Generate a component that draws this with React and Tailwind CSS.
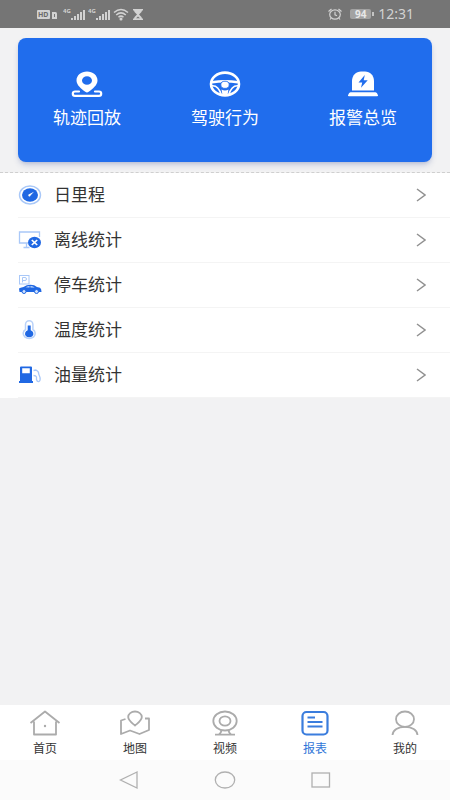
import React, { useState } from "react";

const FONT = "font-['Noto_Sans','Noto_Sans_CJK_SC',sans-serif]";

function SignalIcon() {
  return (
    <svg className="h-4 w-6" viewBox="0 0 24 16" fill="#d2d2d2" aria-hidden="true">
      <text x="0" y="7" fontSize="6" fontWeight="700">4G</text>
      <rect x="8" y="12" width="2" height="2" />
      <rect x="11" y="10" width="2" height="4" />
      <rect x="14" y="8" width="2" height="6" />
      <rect x="17" y="6" width="2" height="8" />
      <rect x="20" y="4" width="2" height="10" />
    </svg>
  );
}

function StatusBar() {
  return (
    <header className="flex h-7 items-center justify-between bg-[#757575] pr-9 pl-9 text-[#d2d2d2]">
      <div className="flex items-center gap-px">
        <svg className="mr-1 h-4 w-[22px]" viewBox="0 0 22 16" aria-hidden="true">
          <rect x="1" y="4" width="13" height="9" rx="1" fill="#d2d2d2" />
          <text x="2" y="11" fontSize="7" fontWeight="700" fill="#6b6b6b">HD</text>
          <path d="M16 6h3.500q1.500 0 1.500 1.500V13h-5z" fill="#d2d2d2" />
          <path d="M18.500 8v3" stroke="#757575" />
        </svg>
        <SignalIcon />
        <SignalIcon />
        <svg className="h-4 w-4" viewBox="0 0 16 16" fill="none" stroke="#d2d2d2" strokeWidth="1.500" aria-hidden="true">
          <path d="M1 6.500Q8 0.500 15 6.500M3.200 9Q8 4.800 12.800 9M5.500 11.300Q8 9 10.500 11.300" />
          <circle cx="8" cy="13" r="0.800" fill="#d2d2d2" />
        </svg>
        <svg className="ml-0.5 h-4 w-3" viewBox="0 0 12 16" fill="#d2d2d2" aria-hidden="true">
          <path d="M1 3h10v1.500h-1L9.500 6 7 8.500 9.500 11l.5 1.500h1V14H1v-1.500h1l.5-1.500L5 8.500 2.500 6 2 4.500H1z" />
          <path d="M4 12.300L6 10.500L8 12.300z" fill="#757575" />
        </svg>
      </div>
      <div className="flex items-center gap-1">
        <svg className="mr-1 h-4 w-3.5" viewBox="0 0 14 16" fill="none" stroke="#d2d2d2" strokeWidth="1.200" aria-hidden="true">
          <ellipse cx="7" cy="8.500" rx="5.300" ry="4.700" />
          <path d="M7 5.800v3l2 1M0.500 5.500L3.500 3M13.500 5.500L10.500 3M3.200 12l-1.200 1.500M10.800 12l1.200 1.500" />
        </svg>
        <span className="flex items-center">
          <span className="h-[10px] w-[21px] rounded-xs bg-[#a2a2a2] text-center text-[10px] leading-[10px] font-bold text-[#e8e8e8]">94</span>
          <span className="ml-px h-1 w-0.5 bg-[#c4c4c4]" />
        </span>
        <span className="text-sm leading-5">12:31</span>
      </div>
    </header>
  );
}

const shortcuts = [
  {
    label: "轨迹回放",
    icon: (
      <svg className="h-7 w-8" viewBox="0 0 32 28" fill="none" aria-hidden="true">
        <path
          fill="#fff"
          fillRule="evenodd"
          d="M16 1.500c5.800 0 10.500 3.800 10.500 9 0 4.800-5 8.300-8.800 11.300q-1.700 1.300-3.400 0C10.500 18.800 5.500 15.300 5.500 10.500c0-5.200 4.700-9 10.500-9zm0 4.700a5 4.300 0 1 0 0 8.600 5 4.300 0 1 0 0-8.600z"
        />
        <path d="M8 21.500H4a2.200 2.200 0 0 0 0 4.400h24a2.200 2.200 0 0 0 0-4.400H24" stroke="#fff" strokeWidth="2.200" strokeLinecap="round" />
      </svg>
    ),
  },
  {
    label: "驾驶行为",
    icon: (
      <svg className="h-7 w-8" viewBox="0 0 32 28" fill="none" aria-hidden="true">
        <ellipse cx="16" cy="14" rx="14" ry="11.400" stroke="#fff" strokeWidth="2.600" />
        <path d="M3 12.300Q16 10.200 29 12.300" stroke="#fff" strokeWidth="2.600" />
        <path d="M3 15.800Q9.500 15.300 12.300 25M29 15.800Q22.500 15.300 19.700 25" stroke="#fff" strokeWidth="1.600" />
        <path d="M12.500 19.500q3.500 1.800 7 0L18.500 25h-5z" fill="#fff" />
        <ellipse cx="16" cy="14.800" rx="4.200" ry="3.600" fill="#fff" stroke="#206ded" strokeWidth="0.900" />
      </svg>
    ),
  },
  {
    label: "报警总览",
    icon: (
      <svg className="h-7 w-8" viewBox="0 0 32 28" aria-hidden="true">
        <path fill="#fff" d="M5 20.500V11C5 5.500 9 1.500 14 1.500h4c5 0 9 4 9 9.500v9.500z" />
        <path fill="#206ded" d="M17.800 5l-6.300 7.500h3.700l-1.200 5.300 6.700-7.500h-4z" />
        <path fill="#fff" d="M3.500 22.300h25q1.500 0 2.500 3 .3 1-1 1H2q-1.300 0-1-1 1-3 2.500-3z" />
      </svg>
    ),
  },
];

const reports = [
  {
    label: "日里程",
    icon: (
      <svg className="h-6 w-6" viewBox="0 0 24 24" fill="none" aria-hidden="true">
        <ellipse cx="12" cy="12" rx="10.500" ry="9" stroke="#a9c8f8" strokeWidth="1.400" />
        <ellipse cx="12" cy="12" rx="8" ry="6.800" fill="#2068e3" />
        <path d="M16 8.800L11 11.300a1.100 1.100 0 1 0 1.500 1.300z" fill="#fff" />
      </svg>
    ),
  },
  {
    label: "离线统计",
    icon: (
      <svg className="h-6 w-6" viewBox="0 0 24 24" fill="none" aria-hidden="true">
        <path d="M10 15H1.500V4h20v5M8.500 15.500v3.500M5.500 19.500h6" stroke="#a9c8f8" strokeWidth="1.300" />
        <ellipse cx="16.500" cy="14.500" rx="6.500" ry="5.800" fill="#2068e3" />
        <path d="M13.800 12l5.400 5M19.200 12l-5.400 5" stroke="#fff" strokeWidth="1.700" />
      </svg>
    ),
  },
  {
    label: "停车统计",
    icon: (
      <svg className="h-6 w-6" viewBox="0 0 24 24" fill="none" aria-hidden="true">
        <rect x="1.500" y="2.500" width="9.500" height="8.500" stroke="#a9c8f8" />
        <path d="M4.500 9.500V4.500h2.500a1.500 1.500 0 0 1 0 3H4.500" stroke="#a9c8f8" />
        <path d="M1 15.500q1-1 4.500-1.500 3-2.200 7-2.200t6.500 2.200l3 .8q1.500.7 1.500 4.200h-22z" fill="#2068e3" />
        <path d="M7.500 14.200q1.700-1.200 4-1.300v1.500zM12.500 12.900q2.500.1 4.300 1.500h-4.300z" fill="#cfe0fb" />
        <circle cx="6" cy="18.500" r="2" fill="#cfe0fb" stroke="#2068e3" />
        <circle cx="18.500" cy="18.500" r="2" fill="#cfe0fb" stroke="#2068e3" />
      </svg>
    ),
  },
  {
    label: "温度统计",
    icon: (
      <svg className="h-6 w-6" viewBox="0 0 24 24" fill="none" aria-hidden="true">
        <path d="M7.500 11.500V6.500a3.700 3.700 0 0 1 7.400 0v5a6 5 0 1 1-7.400 0z" stroke="#b9d2f9" strokeWidth="1.500" />
        <path d="M9.700 7.500h3v4.700a4.200 3.700 0 1 1-3 0z" fill="#2068e3" />
      </svg>
    ),
  },
  {
    label: "油量统计",
    icon: (
      <svg className="h-6 w-6" viewBox="0 0 24 24" fill="none" aria-hidden="true">
        <path fill="#2068e3" fillRule="evenodd" d="M2 4.500q0-1 1-1h10q1 0 1 1v13.500h1V20H1v-2h1zM4.200 5.200v5h7.600v-5z" />
        <path d="M15.500 7.500l2.500-.5q3 1.500 2.700 4 .8 2 1.300 3.500.6 3-1 4-2 .3-2.500-2V14q-.5-1.500-3-1.500" stroke="#a9c8f8" strokeWidth="1.300" />
      </svg>
    ),
  },
];

const tabs = [
  {
    label: "首页",
    icon: (
      <>
        <path d="M1.500 14L16 2.500L30.500 14M5 12.500V25.500H27V12.500" />
        <circle cx="16" cy="17" r="1.200" fill="currentColor" stroke="none" />
      </>
    ),
  },
  {
    label: "地图",
    icon: (
      <>
        <path d="M16 16.500C12.500 13.500 9.200 11.500 9.200 8a6.800 5.500 0 0 1 13.600 0C22.800 11.500 19.500 13.500 16 16.500z" />
        <path d="M6.500 10L2 11.500V25l9-3.500L20.500 25l9.500-4V9.500h-4" />
      </>
    ),
  },
  {
    label: "视频",
    icon: (
      <>
        <ellipse cx="16" cy="12" rx="11.700" ry="9.500" />
        <ellipse cx="16" cy="12" rx="5.500" ry="4.700" />
        <path d="M12.500 21.500Q12 24 10 25.500M19.500 21.500Q20 24 22 25.500M6 25.700h20" />
      </>
    ),
  },
  {
    label: "报表",
    icon: (
      <>
        <rect x="3.500" y="3" width="25" height="22.500" rx="4" strokeWidth="2.200" />
        <path d="M8.500 8.500H16M8.500 13H23.500M8.500 17.500H23.500" />
      </>
    ),
  },
  {
    label: "我的",
    icon: (
      <>
        <ellipse cx="16" cy="10.200" rx="9" ry="7.700" />
        <path d="M3.500 26C4 21 9 17.900 16 17.900S28 21 28.500 26" />
      </>
    ),
  },
];

export default function App() {
  const [active, setActive] = useState("报表");

  return (
    <div className={`flex min-h-screen flex-col bg-[#f2f2f3] text-[#333] ${FONT}`}>
      <StatusBar />

      <main className="flex-1">
        <section className="border-b border-dashed border-[#cfcfcf] px-[18px] py-[10px]">
          <div className="grid grid-cols-3 rounded-lg bg-[#206ded] py-8 shadow-md shadow-blue-900/20">
            {shortcuts.map((item) => (
              <button key={item.label} type="button" className="flex flex-col items-center gap-2 text-white">
                {item.icon}
                <span className="text-[17px] leading-6">{item.label}</span>
              </button>
            ))}
          </div>
        </section>

        <ul className="bg-white">
          {reports.map((item) => (
            <li key={item.label} className="pl-[18px]">
              <a href="#" className="flex h-[45px] items-center border-b border-[#f4f4f4] pr-6">
                {item.icon}
                <span className="ml-3 flex-1 text-[17px] leading-6">{item.label}</span>
                <svg className="h-4 w-2.5" viewBox="0 0 10 16" fill="none" stroke="#919191" strokeWidth="1.500" aria-hidden="true">
                  <path d="M1 2L9 8L1 14" />
                </svg>
              </a>
            </li>
          ))}
        </ul>
      </main>

      <nav className="grid h-[55px] grid-cols-5 bg-white">
        {tabs.map((tab) => (
          <button
            key={tab.label}
            type="button"
            onClick={() => setActive(tab.label)}
            className={`flex flex-col items-center pt-1 ${active === tab.label ? "text-[#3b7ddd]" : "text-[#ababab]"}`}
          >
            <svg className="h-7 w-8" viewBox="0 0 32 28" fill="none" stroke="currentColor" strokeWidth="1.800" strokeLinejoin="round" aria-hidden="true">
              {tab.icon}
            </svg>
            <span className={`mt-1 text-xs leading-4 ${active === tab.label ? "text-[#2f76d8]" : "text-[#333]"}`}>{tab.label}</span>
          </button>
        ))}
      </nav>

      <footer className="flex h-10 items-center justify-center gap-[74px] bg-[#fbfbfb] text-[#b0b0b0]">
        <button type="button" aria-label="Back">
          <svg className="h-5 w-[22px]" viewBox="0 0 22 20" fill="none" stroke="currentColor" strokeWidth="1.300">
            <path d="M19 2L2.500 10L19 18z" />
          </svg>
        </button>
        <button type="button" aria-label="Home">
          <svg className="h-5 w-[22px]" viewBox="0 0 22 20" fill="none" stroke="currentColor" strokeWidth="1.300">
            <ellipse cx="11" cy="10" rx="9.700" ry="8" />
          </svg>
        </button>
        <button type="button" aria-label="Recents">
          <svg className="h-5 w-[22px]" viewBox="0 0 22 20" fill="none" stroke="currentColor" strokeWidth="1.300">
            <rect x="2" y="3" width="17.500" height="14" />
          </svg>
        </button>
      </footer>
    </div>
  );
}
